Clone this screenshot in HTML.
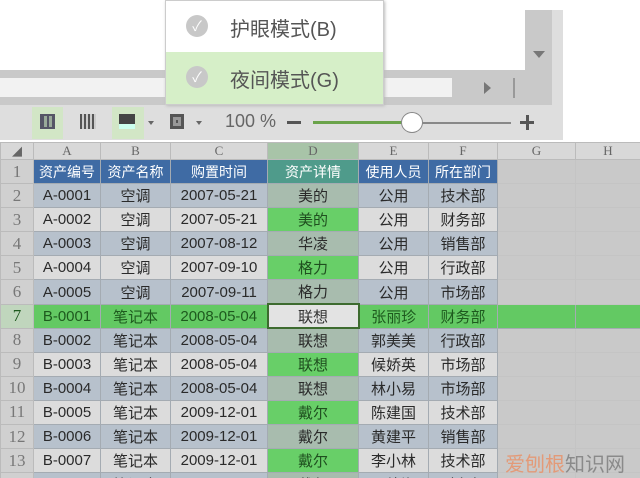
<!DOCTYPE html>
<html style="overflow:hidden;width:640px;height:478px"><head><meta charset="utf-8"><style>
*{margin:0;padding:0;box-sizing:border-box}
body{width:640px;height:478px;overflow:hidden;background:#fff;position:relative;font-family:"Liberation Sans","Noto Sans CJK SC",sans-serif}
.a{position:absolute}
.wrap{position:absolute;left:0;top:142px;width:640px;height:336px;overflow:hidden}
table{border-collapse:collapse;table-layout:fixed;width:640px}
td{height:24.1px;border:1px solid #a4abb2;text-align:center;font-size:15px;color:#2a2a2a;white-space:nowrap;overflow:hidden;padding:0}
tr.h td{height:17px;background:#d8d8d8;color:#666;font-family:"Liberation Serif",serif;font-size:13px;border-color:#bbb}
td.n{background:#d0d0d0;color:#777;font-family:"Liberation Serif",serif;font-size:17px;border-color:#bbb}
td.g{background:#c9c9c9;border-color:#c4c4c4}
tr.e td.c{background:#b7c1cc}
tr.o td.c{background:#dcdcdc}
tr.e td.d{background:#a8bcae}
tr.o td.d{background:#68cf68;color:#1f4f1f}
tr.t td.c{background:#3f6ba4;color:#fff;font-size:14px}
tr.t td.d{background:#4f9b8b;color:#fff;font-size:14px}
tr.s td{background:#63c963;color:#1e5a1e}
tr.s td.n{background:#c0d6bd}
tr.s td.sel{background:#e3e3e3;color:#333;border:2px solid #3d6b2f}
</style></head><body>
<div class="a" style="left:0;top:10px;width:563px;height:130px;background:linear-gradient(#fff,#fff) 0 0/525px 60px no-repeat,#dedede"></div>
<div class="a" style="left:0;top:70px;width:552px;height:35px;background:#c9c9c9"></div>
<div class="a" style="left:525px;top:10px;width:27px;height:60px;background:#c9c9c9"></div>
<div class="a" style="left:0;top:78px;width:452px;height:19px;background:#f2f2f2"></div>
<div class="a" style="left:533px;top:51px;width:0;height:0;border-left:6px solid transparent;border-right:6px solid transparent;border-top:7px solid #777"></div>
<div class="a" style="left:484px;top:82px;width:0;height:0;border-top:6px solid transparent;border-bottom:6px solid transparent;border-left:7px solid #777"></div>
<div class="a" style="left:513px;top:78px;width:2px;height:20px;background:#999"></div>
<div class="a" style="left:32px;top:107px;width:31px;height:32px;background:#d2e6c6"></div>
<div class="a" style="left:112px;top:107px;width:32px;height:32px;background:#d2e6c6"></div>
<div class="a" style="left:40px;top:114px;width:15px;height:15px;border:2px solid #556;background:repeating-linear-gradient(90deg,#556 0 2px,#9a9 2px 5px)"></div>
<div class="a" style="left:80px;top:114px;width:16px;height:15px;background:repeating-linear-gradient(90deg,#555 0 2px,#ccc 2px 4px)"></div>
<div class="a" style="left:119px;top:114px;width:16px;height:15px;background:#444;border-bottom:5px solid #cfe"></div>
<div class="a" style="left:148px;top:121px;border-left:3px solid transparent;border-right:3px solid transparent;border-top:4px solid #666"></div>
<div class="a" style="left:170px;top:114px;width:14px;height:15px;background:#555;border:3px solid #555;box-shadow:inset 0 0 0 3px #999"></div>
<div class="a" style="left:196px;top:121px;border-left:3px solid transparent;border-right:3px solid transparent;border-top:4px solid #666"></div>
<div class="a" style="left:225px;top:111px;font-size:18px;color:#666">100 %</div>
<div class="a" style="left:287px;top:121px;width:14px;height:3px;background:#555"></div>
<div class="a" style="left:313px;top:121px;width:97px;height:3px;background:#6aa34a"></div>
<div class="a" style="left:410px;top:122px;width:101px;height:2px;background:#888"></div>
<div class="a" style="left:401px;top:112px;width:22px;height:21px;border-radius:50%;background:#fff;border:1px solid #888"></div>
<div class="a" style="left:520px;top:121px;width:14px;height:3px;background:#555"></div>
<div class="a" style="left:526px;top:115px;width:3px;height:15px;background:#555"></div>
<div class="a" style="left:165px;top:0;width:219px;height:105px;background:#fff;border:1px solid #ccc;box-shadow:1px 1px 3px #bbb"></div>
<div class="a" style="left:166px;top:52px;width:217px;height:52px;background:#d6efc8"></div>
<div class="a" style="left:186px;top:15px;width:22px;height:22px;border-radius:50%;background:#c8c8c8;color:#fff;font-size:14px;text-align:center;line-height:22px">✓</div>
<div class="a" style="left:186px;top:66px;width:22px;height:22px;border-radius:50%;background:#c8c8c8;color:#fff;font-size:14px;text-align:center;line-height:22px">✓</div>
<div class="a" style="left:230px;top:13px;font-size:20px;color:#555">护眼模式(B)</div>
<div class="a" style="left:230px;top:64px;font-size:20px;color:#555">夜间模式(G)</div>
<div class="wrap"><table>
<colgroup><col style="width:33px"><col style="width:67px"><col style="width:70px"><col style="width:97px"><col style="width:91px"><col style="width:70px"><col style="width:69px"><col style="width:78px"><col style="width:65px"></colgroup>
<tr class="h"><td>◢</td><td>A</td><td>B</td><td>C</td><td style="background:#a8c4a8">D</td><td>E</td><td>F</td><td>G</td><td>H</td></tr>
<tr class="t"><td class="n">1</td><td class="c">资产编号</td><td class="c">资产名称</td><td class="c">购置时间</td><td class="d">资产详情</td><td class="c">使用人员</td><td class="c">所在部门</td><td class="g"></td><td class="g"></td></tr>
<tr class="e"><td class="n">2</td><td class="c">A-0001</td><td class="c">空调</td><td class="c">2007-05-21</td><td class="d">美的</td><td class="c">公用</td><td class="c">技术部</td><td class="g"></td><td class="g"></td></tr>
<tr class="o"><td class="n">3</td><td class="c">A-0002</td><td class="c">空调</td><td class="c">2007-05-21</td><td class="d">美的</td><td class="c">公用</td><td class="c">财务部</td><td class="g"></td><td class="g"></td></tr>
<tr class="e"><td class="n">4</td><td class="c">A-0003</td><td class="c">空调</td><td class="c">2007-08-12</td><td class="d">华凌</td><td class="c">公用</td><td class="c">销售部</td><td class="g"></td><td class="g"></td></tr>
<tr class="o"><td class="n">5</td><td class="c">A-0004</td><td class="c">空调</td><td class="c">2007-09-10</td><td class="d">格力</td><td class="c">公用</td><td class="c">行政部</td><td class="g"></td><td class="g"></td></tr>
<tr class="e"><td class="n">6</td><td class="c">A-0005</td><td class="c">空调</td><td class="c">2007-09-11</td><td class="d">格力</td><td class="c">公用</td><td class="c">市场部</td><td class="g"></td><td class="g"></td></tr>
<tr class="s"><td class="n">7</td><td>B-0001</td><td>笔记本</td><td>2008-05-04</td><td class="sel">联想</td><td>张丽珍</td><td>财务部</td><td></td><td></td></tr>
<tr class="e"><td class="n">8</td><td class="c">B-0002</td><td class="c">笔记本</td><td class="c">2008-05-04</td><td class="d">联想</td><td class="c">郭美美</td><td class="c">行政部</td><td class="g"></td><td class="g"></td></tr>
<tr class="o"><td class="n">9</td><td class="c">B-0003</td><td class="c">笔记本</td><td class="c">2008-05-04</td><td class="d">联想</td><td class="c">候娇英</td><td class="c">市场部</td><td class="g"></td><td class="g"></td></tr>
<tr class="e"><td class="n">10</td><td class="c">B-0004</td><td class="c">笔记本</td><td class="c">2008-05-04</td><td class="d">联想</td><td class="c">林小易</td><td class="c">市场部</td><td class="g"></td><td class="g"></td></tr>
<tr class="o"><td class="n">11</td><td class="c">B-0005</td><td class="c">笔记本</td><td class="c">2009-12-01</td><td class="d">戴尔</td><td class="c">陈建国</td><td class="c">技术部</td><td class="g"></td><td class="g"></td></tr>
<tr class="e"><td class="n">12</td><td class="c">B-0006</td><td class="c">笔记本</td><td class="c">2009-12-01</td><td class="d">戴尔</td><td class="c">黄建平</td><td class="c">销售部</td><td class="g"></td><td class="g"></td></tr>
<tr class="o"><td class="n">13</td><td class="c">B-0007</td><td class="c">笔记本</td><td class="c">2009-12-01</td><td class="d">戴尔</td><td class="c">李小林</td><td class="c">技术部</td><td class="g"></td><td class="g"></td></tr>
<tr class="e"><td class="n">14</td><td class="c">B-0008</td><td class="c">笔记本</td><td class="c">2009-12-01</td><td class="d">戴尔</td><td class="c">吴德海</td><td class="c">财务部</td><td class="g"></td><td class="g"></td></tr>
</table></div>
<div class="a" style="left:505px;top:448px;font-size:20px;color:#e39a78">爱刨根<span style="color:#8a8a8a">知识网</span></div>
</body></html>
